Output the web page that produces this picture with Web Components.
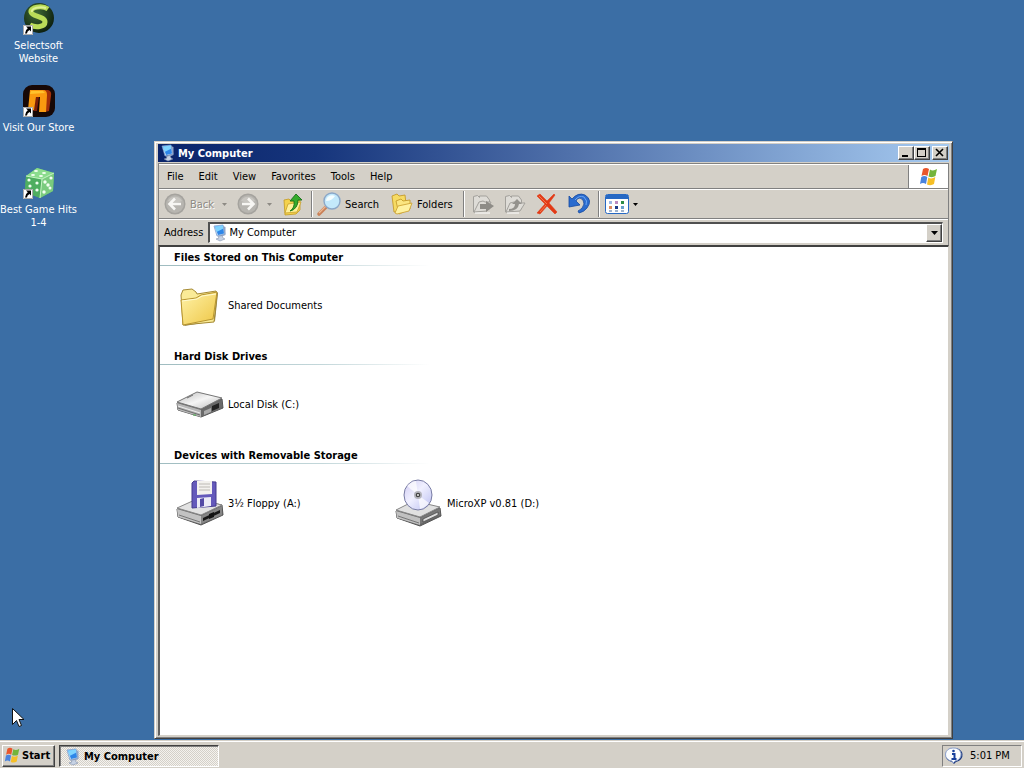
<!DOCTYPE html>
<html lang="en">
<head>
<meta charset="utf-8">
<title>My Computer</title>
<style>
html,body{height:100%;margin:0}
body{font:11px/13px "DejaVu Sans Condensed","DejaVu Sans",sans-serif;color:#000;overflow:hidden}
</style>
</head>
<body>
<desk-top></desk-top>
<script>
const ICONS = {
selectsoft:`<svg viewBox="0 0 32 32"><defs><radialGradient id="g" cx=".4" cy=".35" r=".7"><stop offset="0" stop-color="#3f6a35"/><stop offset="1" stop-color="#0b1c0e"/></radialGradient></defs><circle cx="16" cy="15" r="15" fill="url(#g)"/><path d="M25 6C19 2 7 4 8 9c1 5 14 4 14 10 0 5-9 6-15 3" fill="none" stroke="#b9dc58" stroke-width="5"/><path d="M23 5C17 3 8 5 9 9" fill="none" stroke="#def294" stroke-width="2"/></svg>`,
store:`<svg viewBox="0 0 32 32"><rect width="32" height="32" rx="9" fill="#170806"/><path d="M21 5h4q4 1 3 6l-2 15-4 1z" fill="#a2300a"/><path d="M13 12h3l-2 14h-4z" fill="#7c2008"/><path d="M7 5h13q4 0 4 5l-1 17h-7l1-15h-4l-2 13H5z" fill="#f99a10"/><path d="M8 6h12l2 2-15 1z" fill="#ffc22c"/></svg>`,
dice:`<svg viewBox="0 0 32 32"><path d="M14 1l17 5-1 18-13 7L2 25 3 9z" fill="#59bb65"/><path d="M14 1l17 5-12 6L3 9z" fill="#8bdc8d"/><path d="M3 9l16 3-2 19L2 25z" fill="#4fae60"/><path d="M19 12l12-6-1 18-13 7z" fill="#7acb7e"/><path d="M3 9l16 3 12-6M19 12l-2 19" fill="none" stroke="#c6f5c3"/><g fill="#f1fff0"><ellipse cx="13" cy="4" rx="2" ry="1"/><ellipse cx="21" cy="6" rx="2" ry="1"/><ellipse cx="10" cy="8" rx="2" ry="1"/><ellipse cx="18" cy="9" rx="2" ry="1"/><circle cx="6" cy="13" r="1.600"/><circle cx="14" cy="16" r="1.600"/><circle cx="7" cy="19" r="1.600"/><circle cx="14" cy="23" r="1.600"/><circle cx="22" cy="15" r="1.700"/><circle cx="28" cy="11" r="1.600"/><circle cx="25" cy="18" r="1.700"/><circle cx="21" cy="25" r="1.700"/><circle cx="27" cy="21" r="1.500"/></g></svg>`,
pc:`<svg viewBox="0 0 16 16"><path d="M2 1l9-1 2 9-8 2z" fill="#cfe2f6" stroke="#6f93cb" stroke-width=".7"/><path d="M3 1.500l8-1 1 8-6 1.500z" fill="#2e86e8"/><path d="M3 1.500l8-1 .5 3L4.500 7z" fill="#7fd4ff"/><path d="M11 1l2.500 1v8l-5 2-1-1.500 5-1.500z" fill="#8fa5c8"/><path d="M6 11.500l4-1 1 2.500 2 1-5 2-4-2 3-1z" fill="#c6d2e4" stroke="#7484a4" stroke-width=".5"/></svg>`,
flag:`<svg viewBox="0 0 20 20"><path d="M4 2q3-2 6 0L8.500 9q-3-2-6 0z" fill="#e9562b"/><path d="M11 2.500q3 2 7-.5L16.500 9q-3 2-7 .5z" fill="#74b43a"/><path d="M2.300 10q3-2 6 0L7 17q-3-2-6 0z" fill="#4a83dd"/><path d="M9.300 10.500q3 2 7-.5L15 17q-3 2-7 .5z" fill="#f6bf26"/></svg>`,
back:`<svg viewBox="0 0 22 22"><circle cx="11" cy="11" r="10.500" fill="#a5a39e"/><circle cx="11" cy="11" r="9" fill="#b7b5b0"/><path d="M4 8a8 8 0 0114 0q-6 3-14 0z" fill="#c8c6c1"/><path d="M17 11H6M11 5.500L5.500 11l5.500 5.500" fill="none" stroke="#f7f6f3" stroke-width="2.600"/></svg>`,
forward:`<svg viewBox="0 0 22 22"><circle cx="11" cy="11" r="10.500" fill="#a5a39e"/><circle cx="11" cy="11" r="9" fill="#b7b5b0"/><path d="M4 8a8 8 0 0114 0q-6 3-14 0z" fill="#c8c6c1"/><path d="M5 11h11M11 5.500l5.500 5.500-5.500 5.500" fill="none" stroke="#f7f6f3" stroke-width="2.600"/></svg>`,
up:`<svg viewBox="0 0 22 22"><path d="M2 7l5-1 2 2 9-1v10l-4 4-11 1z" fill="#f4d24c" stroke="#c39a22" stroke-width=".8"/><path d="M3 20l3-9 13-2-4 10z" fill="#fff09a" stroke="#c8a02c" stroke-width=".8"/><path d="M8 18q5-3 4-10H8l6-7 6 6h-4q0 9-8 11z" fill="#36ab2d" stroke="#197018" stroke-width=".9"/></svg>`,
search:`<svg viewBox="0 0 24 24"><path d="M10 14L2 22" stroke="#c98158" stroke-width="3.600" stroke-linecap="round"/><path d="M9 14l-7 7" stroke="#ecb893" stroke-width="1.200"/><circle cx="15" cy="9" r="8" fill="#c3e9fb" stroke="#8ba7c7" stroke-width="1.400"/><path d="M9 9a6 6 0 019-5q-3 5-9 5z" fill="#f4fdff"/></svg>`,
folders:`<svg viewBox="0 0 22 22"><path d="M1 3l5-2 2 2 6-1 1 9-4 7-8 1z" fill="#f6db63" stroke="#c59b2b" stroke-width=".9"/><path d="M5 8l5-2 2 2 7-1v9l-11 5z" fill="#fbe681" stroke="#c59b2b" stroke-width=".9"/><path d="M4 20l3-7 14-3-3 8-12 3z" fill="#fff2a0" stroke="#cfa535" stroke-width=".9"/></svg>`,
moveto:`<svg viewBox="0 0 22 22"><g fill="#dedcd7" stroke="#a3a19c"><path d="M1.500 19V3.500l4-1 2 2V3h7l3 4v9L4 19z"/><path d="M2 19l5-10 4-1 2 1h6l-4 9z"/></g><path d="M8 11h6V8l8 5-8 6v-3H8z" fill="#8e8c87"/><path d="M3 20h15" stroke="#fff"/></svg>`,
copyto:`<svg viewBox="0 0 22 22"><g fill="#dedcd7" stroke="#a3a19c"><path d="M1.500 19V3.500l4-1 2 2V3h7l3 4v9L4 19z"/><path d="M2 19l4-9 4-1 2 1h9l-5 8z"/></g><path d="M5 16q6 0 6-5H8l5-5 5 5h-3q-1 7-10 7z" fill="#94928d"/><path d="M3 20h12" stroke="#fff"/></svg>`,
remove:`<svg viewBox="0 0 22 22"><path d="M1 3l3-2 7 7 7-7 1 1-6 8 8 9-2 2-8-8-7 8-3-1 8-9z" fill="#e23a16" stroke="#e23a16" stroke-width=".6"/><path d="M3 3l8 8M4 19l6-7" stroke="#f6784c" stroke-width="1"/></svg>`,
undo:`<svg viewBox="0 0 22 22"><path d="M1 3l3 3Q10-1 17 2q8 5 2 13-3 4-8 5l-1-2q5-2 6-7 0-5-4-6-3 0-4 3l4 4-11 2z" fill="#2a6bce" stroke="#164a9f" stroke-width=".8"/><path d="M7 7q4-5 9-3 4 4 2 8" fill="none" stroke="#6aa5f2"/></svg>`,
views:`<svg viewBox="0 0 24 20"><rect x=".5" y=".5" width="23" height="19" rx="2" fill="#fff" stroke="#2769c4"/><path d="M1 1h22v4H1z" fill="#2769c4"/><path d="M4 7h3v3H4z" fill="#9db7e6"/><path d="M10 7h3v3h-3z" fill="#bb8ac0"/><path d="M16 7h3v3h-3z" fill="#2f8d45"/><path d="M4 12h3v3H4z" fill="#dc8a62"/><path d="M10 12h3v3h-3z" fill="#1e3c88"/><path d="M16 12h3v3h-3z" fill="#6aa0cc"/><path d="M4 16h3v2H4zM10 16h3v2h-3zM16 16h3v2h-3z" fill="#9fb3ce"/></svg>`,
folder:`<svg viewBox="0 0 48 48"><defs><linearGradient id="f" x2="1" y2="1"><stop offset="0" stop-color="#fff3a8"/><stop offset="1" stop-color="#eec646"/></linearGradient></defs><path d="M40 10l2 2-3 28L8 45z" fill="#8e7f4a"/><path d="M5 14l2-5 9-1 4 3 1 2 19-3 1 4-3 27-31 3z" fill="#faeb97" stroke="#a58a35"/><path d="M5 19l15-2 5-3 16-3-4 27-30 6z" fill="url(#f)" stroke="#b8952f"/><path d="M6 20l15-2 5-3 14-2" fill="none" stroke="#fffbd0"/></svg>`,
disk:`<svg viewBox="0 0 48 48"><defs><linearGradient id="t" x2="1" y2="1"><stop offset="0" stop-color="#b9b9b9"/><stop offset=".5" stop-color="#f5f5f5"/><stop offset="1" stop-color="#b8b8b8"/></linearGradient></defs><path d="M1 23l20-10 25 6 1 9-22 9L2 30z" fill="#666" stroke="#555"/><path d="M1 22l20-10 25 6-21 11z" fill="url(#t)" stroke="#777"/><path d="M1 23l24 7v7L2 30z" fill="#b7b7b7"/><path d="M25 30l21-10v8l-21 9z" fill="#6a6a6a"/><path d="M28 31l7-3v4l-7 3z" fill="#aaa"/><path d="M36 26l7-3v5l-7 3z" fill="#222"/><path d="M2 28l22 7M11 18l6-3" fill="none" stroke="#6d6d6d"/><path d="M2 26l22 7" stroke="#eee"/><path d="M17 35h3" stroke="#48ad4c"/></svg>`,
floppy:`<svg viewBox="0 0 48 48"><path d="M1 30l20-9 25 5 1 10-22 10L2 38z" fill="#666" stroke="#555"/><path d="M1 29l20-9 25 6-21 10z" fill="#e2e2e2" stroke="#888"/><path d="M1 30l24 7v8L2 38z" fill="#c2c2c2"/><path d="M25 37l21-10v9l-21 9z" fill="#858585"/><path d="M27 39l17-8v3l-17 8z" fill="#161616"/><path d="M33 35l5-2v5l-5 2z" fill="#111"/><path d="M16 4l2-2 22 1v24l-24 2z" fill="#6459bb" stroke="#443a8e"/><path d="M21 2h15v13l-15 1z" fill="#f3f1ee"/><path d="M23 5h11M23 8h11M23 11h11" stroke="#bdbab5"/><path d="M21 19l14-1v9l-14 2z" fill="#ecebf6"/><path d="M24 20l4-1v8l-4 1z" fill="#544aa5"/><path d="M3 36l21 7" stroke="#777"/></svg>`,
cd:`<svg viewBox="0 0 48 48"><defs><linearGradient id="c" x2="1" y2="1"><stop offset="0" stop-color="#cfc9f2"/><stop offset=".45" stop-color="#f0f0ff"/><stop offset="1" stop-color="#b9bdf0"/></linearGradient></defs><path d="M1 32l18-9 26 6 1 8-21 10L2 39z" fill="#666" stroke="#555"/><path d="M1 31l18-9 26 6-20 10z" fill="#e0e0e0" stroke="#888"/><path d="M1 32l24 7v7L2 39z" fill="#c0c0c0"/><path d="M25 39l20-10v7l-20 9z" fill="#777"/><path d="M28 40l15-7v3l-15 7z" fill="#ddd" stroke="#444" stroke-width=".7"/><ellipse cx="23" cy="16" rx="14" ry="15" fill="url(#c)" stroke="#777ba3"/><path d="M23 16L12 7q5-5 9-5zM23 16l11 8q-4 5-9 6z" fill="#fff" opacity=".7"/><circle cx="23" cy="16" r="4" fill="#b4b4bc"/><circle cx="23" cy="16" r="2.300" fill="#444"/><circle cx="23" cy="16" r=".9" fill="#fff"/><path d="M3 37l21 7" stroke="#777"/></svg>`,
info:`<svg viewBox="0 0 18 18"><path d="M9 1a7.500 7 0 012 14l-2 2-2-2A7.500 7 0 019 1z" fill="#1c397f"/><path d="M8 1a7 6.500 0 012 13l-2 2-1-2A7 6.500 0 018 1z" fill="#fbfdff" stroke="#90a4ce"/><path d="M7 7h2.500v5M6.500 12h5" fill="none" stroke="#173f9c" stroke-width="2"/><circle cx="8.500" cy="4" r="1.300" fill="#173f9c"/></svg>`,
shortcut:`<svg viewBox="0 0 10 10"><path d="M0 0h10v10H0z" fill="#fff"/><path d="M.5.500h9v9h-9z" fill="none" stroke="#555" stroke-width=".5"/><path d="M3 1.500h5v5L6.500 5Q4 6 4 8.500H2Q2 5 4.800 3.200z" fill="#000"/></svg>`,
pointer:`<svg viewBox="0 0 12 20"><path d="M.5.500v16l4-4 2.500 6 2.500-1-2.500-6h5z" fill="#fff" stroke="#111"/></svg>`,
minimize:`<svg viewBox="0 0 12 10"><path d="M2 7h6v2H2z"/></svg>`,
maximize:`<svg viewBox="0 0 12 10"><path d="M1 0h9v9H1zM2 2v6h7V2z" fill-rule="evenodd"/></svg>`,
close:`<svg viewBox="0 0 12 10"><path d="M2 1l7 7M9 1L2 8" stroke="#000" stroke-width="1.600"/></svg>`,
down:`<svg viewBox="0 0 7 4"><path d="M0 0h7L3.500 4z" fill="currentColor"/></svg>`,
caret:`<svg viewBox="0 0 5 3"><path d="M0 0h5L2.500 3z" fill="currentColor"/></svg>`
};

const define = (name, html, setup) => {
  const template = document.createElement('template');
  template.innerHTML = html;
  customElements.define(name, class extends HTMLElement {
    constructor() {
      super();
      this.attachShadow({mode: 'open'}).append(template.content.cloneNode(true));
    }
    connectedCallback() { if (setup) setup(this, this.shadowRoot); }
  });
};

/* Icon: name picks the drawing, the host's --w and --h give its box */
define('ui-icon', `<style>:host{display:block;flex:none;width:var(--w,16px);height:var(--h,var(--w,16px))}svg{display:block;width:100%;height:100%;overflow:visible}</style>`,
  (el, root) => { if (!root.querySelector('svg')) root.append(document.createRange().createContextualFragment(ICONS[el.getAttribute('name')])); });

define('desk-shortcut', `<style>
:host{display:block;height:82px}
a{display:flex;flex-direction:column;align-items:center;gap:4px;color:#fff;text-decoration:none;text-align:center}
.pic{position:relative;--w:32px}
.mark{position:absolute;left:0;bottom:0;--w:10px}
</style><a href="#"><span class="pic"><slot name="icon"></slot><ui-icon class="mark" name="shortcut"></ui-icon></span><span><slot></slot></span></a>`);

define('tool-button', `<style>
:host{display:block;--w:22px}
button{display:flex;align-items:center;gap:4px;height:28px;padding:0;border:0;background:none;font:inherit;color:inherit;white-space:nowrap}
:host([disabled]) button{color:#8d8a84;text-shadow:1px 1px #fff}
.caret{display:none;--w:5px;--h:3px;margin-left:var(--caret-gap,4px)}
:host([menu]) .caret{display:block}
</style><button type="button"><ui-icon></ui-icon><slot></slot><ui-icon class="caret" name="caret"></ui-icon></button>`,
  (el, root) => {
    const b = root.querySelector('button');
    b.disabled = el.hasAttribute('disabled');
    b.setAttribute('aria-label', el.getAttribute('label') || el.textContent);
    const old = root.querySelector('ui-icon');
    const i = document.createElement('ui-icon');
    i.setAttribute('name', el.getAttribute('icon'));
    old.replaceWith(i);
  });

define('tool-bar', `<style>
:host{display:flex;align-items:center;height:28px;padding-left:5px;border-top:1px solid #fff;border-bottom:1px solid #808080}
i{width:1px;height:26px;background:#808080;border-right:1px solid #fff}
.a{display:flex;gap:10px;padding-right:7px}
.b{display:flex;gap:12px;padding:0 10px 0 4px}
.c{display:flex;gap:10px;padding:0 8px 0 7px}
.d{padding-left:5px}
.wide{--w:24px}.views{--w:24px;--h:20px;--caret-gap:0}
</style>
<div class="a"><tool-button icon="back" menu disabled>Back</tool-button><tool-button icon="forward" label="Forward" menu disabled></tool-button><tool-button icon="up" label="Up"></tool-button></div><i></i>
<div class="b"><tool-button class="wide" icon="search">Search</tool-button><tool-button icon="folders">Folders</tool-button></div><i></i>
<div class="c"><tool-button icon="moveto" label="Move To" disabled></tool-button><tool-button icon="copyto" label="Copy To" disabled></tool-button><tool-button icon="remove" label="Delete"></tool-button><tool-button icon="undo" label="Undo"></tool-button></div><i></i>
<div class="d"><tool-button class="views" icon="views" label="Views" menu></tool-button></div>`);

define('menu-bar', `<style>
:host{display:flex;height:23px;border-top:1px solid #fff;border-bottom:1px solid #808080}
nav{display:flex;flex:1;align-items:center;border-right:1px solid #808080}
button{font:inherit;border:0;background:none;padding:0 7px 0 8px;height:20px}
.logo{display:flex;align-items:center;justify-content:center;width:38px;background:#fff;border-left:1px solid #fff;--w:20px}
</style><nav><button>File</button><button>Edit</button><button>View</button><button>Favorites</button><button>Tools</button><button>Help</button></nav><div class="logo"><ui-icon name="flag"></ui-icon></div>`);

define('address-bar', `<style>
:host{display:flex;align-items:center;height:24px;padding:0 5px 1px 5px;border-top:1px solid #fff;gap:5px}
.box{position:relative;flex:1;height:21px;box-sizing:border-box;border:1px solid #fff;border-top:2px solid #505050;border-left:2px solid #505050;background:#fff}
select{appearance:none;width:100%;height:100%;border:0;padding:0 20px 0 19px;background:none;font:inherit;color:#000;outline:0}
.pic{position:absolute;left:2px;top:1px}
.drop{position:absolute;right:0;top:0;bottom:0;width:16px;box-sizing:border-box;display:flex;align-items:center;justify-content:center;pointer-events:none;background:#d4d0c8;border:1px solid #fff;border-right-color:#404040;border-bottom-color:#404040;box-shadow:inset -1px -1px #808080;--w:7px;--h:4px}
</style><label for="where">Address</label><div class="box"><select id="where"><option>My Computer</option></select><ui-icon class="pic" name="pc"></ui-icon><span class="drop"><ui-icon name="down"></ui-icon></span></div>`);

define('item-group', `<style>
:host{display:block;height:99px}
h2{margin:0;padding:4px 0 1px 14px;height:13px;font:inherit;font-weight:bold;white-space:nowrap}
hr{margin:0;border:0;height:1px;width:270px;background:linear-gradient(90deg,#9fbcc0,#c3d7da 60%,#fff)}
div{display:grid;grid-template-columns:repeat(auto-fill,219px);padding-left:16px;height:78px;align-items:center}
</style><h2></h2><hr><div><slot></slot></div>`, (el, root) => root.querySelector('h2').textContent = el.getAttribute('heading'));

define('drive-item', `<style>:host{display:flex;align-items:center;gap:4px;white-space:nowrap;--w:48px}</style><slot name="icon"></slot><span><slot></slot></span>`);

define('app-window', `<style>
:host{display:flex;flex-direction:column;box-sizing:border-box;padding:2px;background:#d4d0c8;border:1px solid #d4d0c8;border-right-color:#404040;border-bottom-color:#404040;box-shadow:inset 1px 1px #fff,inset -1px -1px #808080}
header{display:flex;align-items:center;gap:2px;height:18px;margin:0 1px;padding:0 1px 0 2px;background:linear-gradient(90deg,#0a246a,#16357c 20%,#a6caf0);color:#fff}
h1{flex:1;margin:0;font:inherit;font-weight:bold}
header button{width:16px;height:14px;padding:0;display:flex;justify-content:center;align-items:center;background:#d4d0c8;border:1px solid #fff;border-right-color:#404040;border-bottom-color:#404040;box-shadow:inset -1px -1px #808080;--w:12px;--h:10px}
.pair{display:flex}
.bars{margin:1px 1px 0;border:1px solid #808080;border-bottom:0}
main{flex:1;margin:0 1px;background:#fff;border:2px solid #404040;border-left-color:#606060;border-right:1px solid #d4d0c8;border-bottom:1px solid #d4d0c8}
</style>
<header><ui-icon name="pc"></ui-icon><h1>My Computer</h1><span class="pair"><button aria-label="Minimize"><ui-icon name="minimize"></ui-icon></button><button aria-label="Maximize"><ui-icon name="maximize"></ui-icon></button></span><button aria-label="Close"><ui-icon name="close"></ui-icon></button></header>
<div class="bars"><menu-bar></menu-bar><tool-bar></tool-bar><address-bar></address-bar></div>
<main><slot></slot></main>`);

define('task-bar', `<style>
:host{display:flex;align-items:center;box-sizing:border-box;height:28px;padding:3px 2px 1px;background:#d4d0c8;border-top:1px solid #d4d0c8;box-shadow:inset 0 1px #fff;white-space:nowrap}
button{display:flex;align-items:center;box-sizing:border-box;height:22px;font:inherit;font-weight:bold;padding:0 1px;gap:1px;background:#d4d0c8;border:1px solid #fff;border-right-color:#404040;border-bottom-color:#404040;box-shadow:inset -1px -1px #808080}
.start{width:53px;--w:17px;margin-right:4px}
.task{width:160px;padding:2px 4px 0 5px;gap:3px;--w:16px;border-color:#404040 #fff #fff #404040;box-shadow:inset 1px 1px #808080;background:repeating-conic-gradient(#f4f2ee 0 25%,#d4d0c8 0 50%) 0 0/2px 2px}
.tray{display:flex;align-items:center;gap:7px;margin-left:auto;box-sizing:border-box;height:22px;width:80px;padding-left:2px;border:1px solid #808080;border-right-color:#fff;border-bottom-color:#fff;--w:18px}
</style><button class="start"><ui-icon name="flag"></ui-icon>Start</button><button class="task"><ui-icon name="pc"></ui-icon>My Computer</button><div class="tray"><ui-icon name="info"></ui-icon><time>5:01 PM</time></div>`);

define('desk-top', `<style>
:host{display:flex;flex-direction:column;height:100%;background:#3b6ea5}
.area{position:relative;flex:1;padding-top:3px}
.icons{width:77px}
app-window{position:absolute;left:154px;top:141px;right:71px;bottom:1px}
.pointer{position:absolute;left:12px;bottom:12px;--w:12px;--h:20px}
</style>
<div class="area">
<div class="icons">
<desk-shortcut><ui-icon slot="icon" name="selectsoft"></ui-icon>Selectsoft Website</desk-shortcut>
<desk-shortcut><ui-icon slot="icon" name="store"></ui-icon>Visit Our Store</desk-shortcut>
<desk-shortcut><ui-icon slot="icon" name="dice"></ui-icon>Best Game Hits 1-4</desk-shortcut>
</div>
<app-window>
<item-group heading="Files Stored on This Computer"><drive-item><ui-icon slot="icon" name="folder"></ui-icon>Shared Documents</drive-item></item-group>
<item-group heading="Hard Disk Drives"><drive-item><ui-icon slot="icon" name="disk"></ui-icon>Local Disk (C:)</drive-item></item-group>
<item-group heading="Devices with Removable Storage"><drive-item><ui-icon slot="icon" name="floppy"></ui-icon>3½ Floppy (A:)</drive-item><drive-item><ui-icon slot="icon" name="cd"></ui-icon>MicroXP v0.81 (D:)</drive-item></item-group>
</app-window>
<ui-icon class="pointer" name="pointer"></ui-icon>
</div>
<task-bar></task-bar>`);
</script>
</body>
</html>
